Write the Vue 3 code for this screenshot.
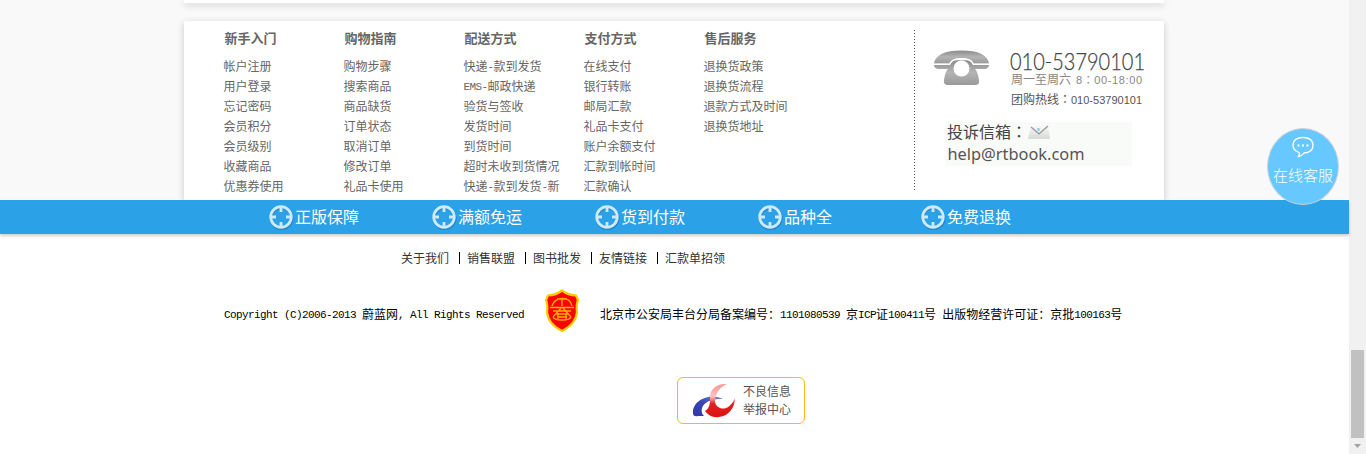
<script setup>
const columns = [
  { title: '新手入门', items: ['帐户注册', '用户登录', '忘记密码', '会员积分', '会员级别', '收藏商品', '优惠券使用'] },
  { title: '购物指南', items: ['购物步骤', '搜索商品', '商品缺货', '订单状态', '取消订单', '修改订单', '礼品卡使用'] },
  { title: '配送方式', items: ['快递-款到发货', 'EMS-邮政快递', '验货与签收', '发货时间', '到货时间', '超时未收到货情况', '快递-款到发货-新'] },
  { title: '支付方式', items: ['在线支付', '银行转账', '邮局汇款', '礼品卡支付', '账户余额支付', '汇款到帐时间', '汇款确认'] },
  { title: '售后服务', items: ['退换货政策', '退换货流程', '退款方式及时间', '退换货地址'] },
]
const promises = ['正版保障', '满额免运', '货到付款', '品种全', '免费退换']
const links = ['关于我们', '销售联盟', '图书批发', '友情链接', '汇款单招领']
const copyright = 'Copyright (C)2006-2013 蔚蓝网, All Rights Reserved'
const license = '北京市公安局丰台分局备案编号：1101080539 京ICP证100411号 出版物经营许可证：京批100163号'

// Splits text into runs so Latin characters are set at half the CJK width.
const runs = (s) => s.match(/[\x20-\x7e]+|[^\x20-\x7e]+/g).map((t) => ({ t, latin: t.charCodeAt(0) < 127 }))
</script>

<template>
  <div class="window">
    <div class="page">
      <div class="upper">
        <div class="prev-card"></div>
        <section class="card">
          <div class="columns">
            <dl v-for="c in columns" :key="c.title">
              <dt>{{ c.title }}</dt>
              <dd v-for="i in c.items" :key="i"><span v-for="(r, k) in runs(i)" :key="k" :class="{ latin: r.latin }">{{ r.t }}</span></dd>
            </dl>
          </div>
          <div class="contact">
            <svg width="249" height="162" viewBox="0 0 249 162">
              <defs>
                <linearGradient id="phone" x1="0" y1="0" x2="0" y2="1">
                  <stop offset="0" stop-color="#8b8b8b" /><stop offset=".5" stop-color="#b4b4b4" /><stop offset="1" stop-color="#999" />
                </linearGradient>
                <linearGradient id="mail" x1="0" y1="0" x2="0" y2="1">
                  <stop offset="0" stop-color="#fafafa" /><stop offset="1" stop-color="#d8d8d8" />
                </linearGradient>
              </defs>
              <line x1=".5" y1="1" x2=".5" y2="162" stroke="#555" stroke-dasharray="1 2" />
              <path d="M20 34.500C21 26 31 21.500 47.500 21.500S74 26 75 34.500H59Q58 29 47.500 29T36 34.500Z" fill="url(#phone)" />
              <path d="M20 36H36Q36.500 33 40 31H55Q58.500 33 59 36H75Q75 39 71 40H61Q64 43 65 51Q66 56 61 56H34Q29 56 30 51Q31 43 34 40H24Q20 39 20 36Z" fill="url(#phone)" />
              <path d="M20 35.300H35.500Q38 30.500 43 30.500H52Q57 30.500 59.500 35.300H75" fill="none" stroke="#fff" stroke-width="1.300" />
              <circle cx="47.500" cy="39.500" r="8" fill="#fff" />
              <text class="tel" x="96" y="41" textLength="135" lengthAdjust="spacingAndGlyphs">010-53790101</text>
              <text class="cjk muted" x="97" y="55">周一至周六</text>
              <text class="hours muted" x="162" y="55" textLength="66">8：00-18:00</text>
              <text class="cjk dark" x="97" y="74.500">团购热线：</text>
              <text class="hours dark" x="157" y="74.500" textLength="71">010-53790101</text>
              <rect x="32" y="93" width="186" height="44" fill="#f9fbf9" />
              <text class="mail-label" x="33" y="109">投诉信箱：</text>
              <path d="M117 96H134L136 110H114Z" fill="url(#mail)" />
              <path d="M117 98L125 105L134 97" fill="none" stroke="#999" stroke-width="1.300" />
              <path d="M124.500 99v3" stroke="#7fcaf0" stroke-width="2" />
              <text class="mail" x="33.500" y="131" textLength="137" lengthAdjust="spacingAndGlyphs">help@rtbook.com</text>
            </svg>
          </div>
        </section>
      </div>
      <div class="bar">
        <div v-for="p in promises" :key="p" class="promise">
          <svg width="26" height="26" viewBox="0 0 26 26">
            <circle cx="13.500" cy="14" r="10.500" fill="none" stroke="#1c78b4" stroke-width="3" opacity=".65" />
            <circle cx="13" cy="13" r="10.300" fill="none" stroke="#cdeafb" stroke-width="2.800" />
            <path d="M13 4V8M13 18V22M4 13H8M18 13H22" stroke="#cdeafb" stroke-width="2.800" />
          </svg>
          <span>{{ p }}</span>
        </div>
      </div>
      <nav class="links">
        <a v-for="l in links" :key="l">{{ l }}</a>
      </nav>
      <div class="legal">
        <span class="copy"><span v-for="(r, k) in runs(copyright)" :key="k" :class="{ latin: r.latin }">{{ r.t }}</span></span>
        <svg class="badge" width="36" height="44" viewBox="0 0 36 44">
          <path d="M18 1.500Q24 6 32 6.500L34 11Q32 16 33 23Q32 35 18 42Q4 35 3 23Q4 16 2 11L4 6.500Q12 6 18 1.500Z" fill="#f00" stroke="#fc0" stroke-width="2.200" />
          <path d="M8 17Q10 10 18 9.500T28 17M13 10H23M18 10V17M6 18.500H30M9 22H27M17 19L9 28M19 19L27 28M12 25H24M9 28Q10 31 18 31T27 28M14 24V30M22 24V30M13 28H23" fill="none" stroke="#ffb000" stroke-width="1.300" />
        </svg>
        <span><span v-for="(r, k) in runs(license)" :key="k" :class="{ latin: r.latin }">{{ r.t }}</span></span>
      </div>
      <div class="report">
        <svg width="44" height="38" viewBox="0 0 44 38">
          <defs>
            <linearGradient id="flame" x1="0" y1="0" x2="0" y2="1">
              <stop offset="0" stop-color="#ff9494" /><stop offset=".38" stop-color="#ffc4c0" /><stop offset=".6" stop-color="#e32020" /><stop offset="1" stop-color="#dc1010" />
            </linearGradient>
            <linearGradient id="wave" x1="1" y1="0" x2="0" y2="1">
              <stop offset="0" stop-color="#8088cc" /><stop offset=".5" stop-color="#3a44b0" /><stop offset="1" stop-color="#3038ac" />
            </linearGradient>
          </defs>
          <path d="M31 16C19 9 0 17 1 30Q1 34 6 33L12 33C6 26 12 15 31 16Z" fill="url(#wave)" />
          <path d="M35 1C25 0 18 6 18 14C18 20 18 25 13 28C16 32 21 35 27 34C37 33 43 24 43 15C39 24 33 27 28 25C23 23 22 18 24 13C26 7 30 3 35 1Z" fill="url(#flame)" />
        </svg>
        <div class="report-text"><div>不良信息</div><div>举报中心</div></div>
      </div>
      <div class="service">
        <svg width="24" height="22" viewBox="0 0 24 22">
          <path d="M8 16.500Q2 14.500 2 9.300Q2 1.500 12 1.500T22 9.300Q22 16.500 13 17Q11 20 7.500 20.500Q9 18.500 8 16.500Z" fill="none" stroke="#fff" stroke-width="1.300" />
          <path d="M6.500 8.500h2v2h-2zM11 8.500h2v2h-2zM15.500 8.500h2v2h-2z" fill="#fff" />
        </svg>
        <span>在线客服</span>
      </div>
    </div>
    <div class="scrollbar">
      <div class="thumb"></div>
      <svg width="17" height="16" viewBox="0 0 17 16"><path d="M5 6H12L8.500 10Z" fill="#a3a3a3" /></svg>
    </div>
  </div>
</template>

<style>
body { margin: 0; overflow: hidden; }
</style>

<style scoped>
.window { display: flex; width: 1366px; height: 454px; overflow: hidden; background: #fff; font: 12px/20px "Noto Sans CJK SC", sans-serif; }
.page { position: relative; width: 1349px; height: 454px; }
.latin { font: 11px/18px "Liberation Mono", monospace; letter-spacing: -.6px; white-space: pre; vertical-align: 1px; }
.upper { height: 200px; background: #f9f9f9; overflow: hidden; }
.prev-card { width: 980px; height: 3px; margin: 0 auto 18px 184px; background: #fff; box-shadow: 0 2px 7px rgba(0, 0, 0, .22); }
.card { display: flex; width: 980px; height: 179px; margin-left: 184px; background: #fff; box-shadow: 0 2px 7px rgba(0, 0, 0, .2); }
.columns { display: flex; flex: none; box-sizing: border-box; width: 730px; padding: 7px 0 0 39.500px; }
dl { width: 120px; margin: 0; flex: none; color: #666; }
dt { height: 28px; padding-left: 1px; font-size: 13px; font-weight: bold; line-height: 20px; }
dd { margin: 0; height: 20px; line-height: 20px; white-space: nowrap; }
.contact { flex: none; padding-top: 8px; }
.contact svg { display: block; overflow: visible; }
.tel { font: 300 23px Lato, sans-serif; fill: #444; stroke: #444; stroke-width: .25px; }
.cjk { font: 12px "Noto Sans CJK TC", sans-serif; }
.hours { font: 11px "Liberation Sans", "Noto Sans CJK TC", sans-serif; }
.muted { fill: #888; }
.dark { fill: #555; }
.mail-label { font: 16px "Noto Sans CJK TC", sans-serif; fill: #444; }
.mail { font: 16px "Noto Sans", "Open Sans", sans-serif; fill: #555; }
.bar { display: flex; height: 34px; padding-left: 268px; background: #2ba1e7; box-shadow: 0 2px 3px rgba(0, 0, 0, .2); }
.promise { display: flex; align-items: center; width: 163px; color: #fff; font-size: 16px; line-height: 32px; }
.promise svg { flex: none; margin-right: 1px; }
.promise span { padding-bottom: 2px; }
.links { display: flex; padding: 14px 0 0 401px; color: #333; }
.links a { position: relative; margin-right: 18px; }
.links a + a::before { content: ""; position: absolute; left: -8px; top: 4px; width: 1px; height: 12px; background: #000; }
.legal { display: flex; align-items: center; height: 44px; margin-top: 21px; padding-left: 224px; color: #000; white-space: nowrap; }
.legal > span { padding-top: 6px; }
.copy { width: 320px; }
.badge { margin-right: 20px; }
.report { box-sizing: border-box; display: flex; width: 128px; height: 47px; margin: 44px 0 0 677px; padding: 5px 0 0 14px; border: 1px solid #f8b91d; border-radius: 6px; color: #555; }
.report-text { margin: -1px 0 0 7px; line-height: 18px; }
.service { position: absolute; left: 1267px; top: 128px; box-sizing: border-box; width: 72px; height: 77px; border: 1px solid #c9d3da; border-radius: 50%; background: #66c8ff; display: flex; flex-direction: column; align-items: center; padding-top: 7px; color: #fff; font-size: 15px; font-weight: 300; }
.service span { margin-top: 7px; white-space: nowrap; }
.scrollbar { width: 17px; background: #f1f1f1; }
.thumb { width: 13px; height: 88px; margin: 350px 0 0 2px; background: #c1c1c1; }
.scrollbar svg { display: block; }
</style>
